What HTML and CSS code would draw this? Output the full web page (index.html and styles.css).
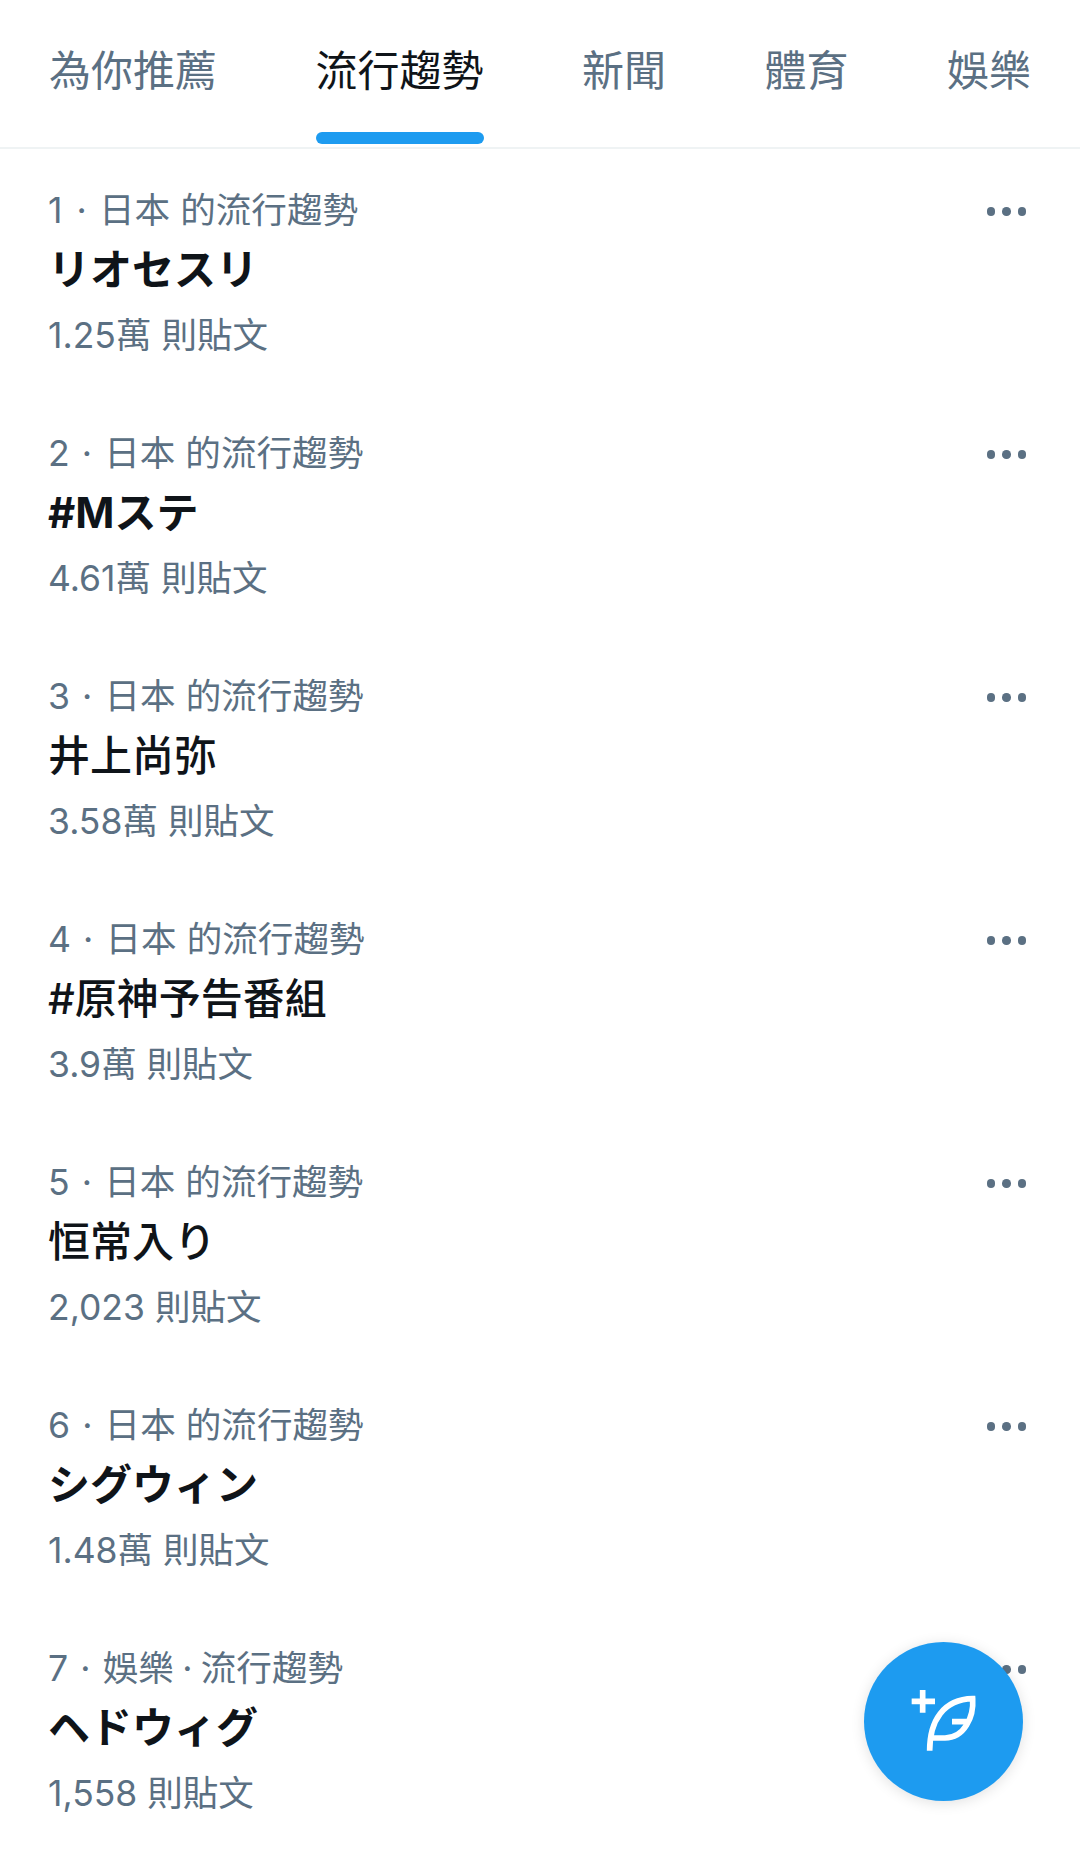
FILE: index.html
```html
<!DOCTYPE html>
<html lang="zh-Hant">
<head>
  <meta charset="UTF-8">
  <title>流行趨勢</title>
  <link rel="stylesheet" href="styles.css">
</head>
<body>

  <div class="tabs">
    <div class="tab">為你推薦</div>
    <div class="tab active">流行趨勢</div>
    <div class="tab">新聞</div>
    <div class="tab">體育</div>
    <div class="tab">娛樂</div>
  </div>

  <div class="trend-list">
    <div class="trend">
      <div class="trend-meta"><span class="rank one">1</span><span class="dot">·</span>日本 的流行趨勢</div>
      <div class="trend-name">リオセスリ</div>
      <div class="trend-count">1.25萬 則貼文</div>
      <div class="more"><span></span><span></span><span></span></div>
    </div>
    <div class="trend">
      <div class="trend-meta"><span class="rank">2</span><span class="dot">·</span>日本 的流行趨勢</div>
      <div class="trend-name">#Mステ</div>
      <div class="trend-count">4.61萬 則貼文</div>
      <div class="more"><span></span><span></span><span></span></div>
    </div>
    <div class="trend">
      <div class="trend-meta"><span class="rank">3</span><span class="dot">·</span>日本 的流行趨勢</div>
      <div class="trend-name kanji">井上尚弥</div>
      <div class="trend-count">3.58萬 則貼文</div>
      <div class="more"><span></span><span></span><span></span></div>
    </div>
    <div class="trend">
      <div class="trend-meta"><span class="rank">4</span><span class="dot">·</span>日本 的流行趨勢</div>
      <div class="trend-name kanji">#原神予告番組</div>
      <div class="trend-count">3.9萬 則貼文</div>
      <div class="more"><span></span><span></span><span></span></div>
    </div>
    <div class="trend">
      <div class="trend-meta"><span class="rank">5</span><span class="dot">·</span>日本 的流行趨勢</div>
      <div class="trend-name kanji">恒常入り</div>
      <div class="trend-count">2,023 則貼文</div>
      <div class="more"><span></span><span></span><span></span></div>
    </div>
    <div class="trend">
      <div class="trend-meta"><span class="rank">6</span><span class="dot">·</span>日本 的流行趨勢</div>
      <div class="trend-name">シグウィン</div>
      <div class="trend-count">1.48萬 則貼文</div>
      <div class="more"><span></span><span></span><span></span></div>
    </div>
    <div class="trend">
      <div class="trend-meta"><span class="rank">7</span><span class="dot">·</span>娛樂<span class="dot small">·</span>流行趨勢</div>
      <div class="trend-name">ヘドウィグ</div>
      <div class="trend-count">1,558 則貼文</div>
      <div class="more"><span></span><span></span><span></span></div>
    </div>
  </div>

  <div class="fab">
    <svg viewBox="102 64 477 477" width="159" height="159" fill="none" stroke="#fff" stroke-width="17">
      <path d="M278 208v68M245 242h70"/>
      <path d="M299 390C299 300 340 236 428 234C432 290 402 352 345 352H300M366 303H410"/>
    </svg>
  </div>

</body>
</html>
```

FILE: styles.css
```css
* {
  box-sizing: border-box;
}

html, body {
  height: 100%;
}

body {
  margin: 0;
  position: relative;
  overflow: hidden;
  background: #fff;
  font-family: Inter, "Noto Sans CJK TC", sans-serif;
}

.tabs {
  display: flex;
  height: 149px;
  padding-left: 49px;
  gap: 98.5px;
  border-bottom: 2px solid #eff3f4;
}

.tab {
  position: relative;
  padding-top: 44px;
  font-size: 42px;
  line-height: 54px;
  color: #5b7083;
}

.tab.active {
  color: #0f1419;
}

.tab.active::after {
  content: "";
  position: absolute;
  left: 0;
  right: 0;
  bottom: 3px;
  height: 12px;
  border-radius: 6px;
  background: #1d9bf0;
}

.trend {
  position: relative;
  height: 243px;
  padding: 38px 0 0 48px;
}

.trend-meta,
.trend-count {
  font-size: 35.5px;
  line-height: 48px;
  color: #5b7083;
}

.trend-meta {
  font-size: 35.6px;
}

.rank.one {
  margin-right: 2px;
}

.dot {
  display: inline-block;
  width: 34.5px;
  text-align: center;
}

.dot.small {
  width: 27px;
}

.trend-name {
  margin-top: 7px;
  font-size: 42px;
  line-height: 56px;
  font-weight: 700;
  color: #0f1419;
}

.trend-name.kanji {
  font-weight: 500;
}

.trend-count {
  margin-top: 14px;
}

.more {
  position: absolute;
  top: 58px;
  right: 54px;
  display: flex;
  gap: 7px;
}

.more span {
  width: 8.5px;
  height: 8.5px;
  border-radius: 50%;
  background: #5b7083;
}

.fab {
  position: absolute;
  right: 57px;
  bottom: 51px;
  width: 159px;
  height: 159px;
  border-radius: 50%;
  background: #1d9bf0;
  box-shadow: 0 2px 14px rgba(0, 0, 0, 0.12);
}

.fab svg {
  display: block;
}
```
